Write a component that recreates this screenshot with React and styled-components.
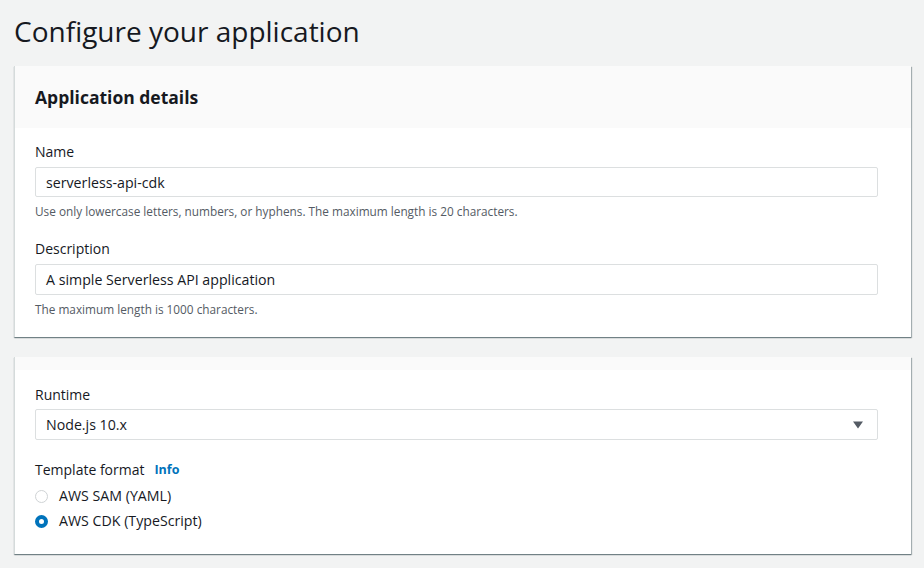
import React, { useState } from 'react';
import styled, { createGlobalStyle } from 'styled-components';

const GlobalStyle = createGlobalStyle`
  html, body {
    margin: 0;
    padding: 0;
    background: #f2f3f3;
    font-family: "Open Sans", "Noto Sans", Arial, sans-serif;
    color: #16191f;
  }
`

const Page = styled.div`
  padding: 13px 13px 16px 14px;
`

const PageTitle = styled.h1`
  margin: 0 0 17px 0;
  font-size: 28px;
  font-weight: 400;
  line-height: 36px;
  color: #16191f;
`

const Card = styled.section`
  background: #fff;
  border-left: 1px solid #d5dbdb;
  box-shadow: 0 1px 1px 0 rgba(0, 28, 36, 0.35), 1px 1px 1px 0 rgba(0, 28, 36, 0.28);
  margin-bottom: 20px;
`

const CardHeader = styled.div`
  background: #fafafa;
  height: ${p => p.$h}px;
  padding-left: 20px;
  display: flex;
  align-items: center;
  h2 {
    margin: 0;
    font-size: 17.5px;
    font-weight: 700;
  }
`

const CardBody = styled.div`
  padding: ${p => p.$pt}px 33px ${p => p.$pb}px 20px;
  display: flex;
  flex-direction: column;
`

const Field = styled.div`
  display: flex;
  flex-direction: column;
  margin-bottom: ${p => p.$mb || 0}px;
`

const Label = styled.div`
  font-size: 14px;
  line-height: 18px;
  color: #16191f;
  margin-bottom: ${p => p.$mb ?? 6}px;
  display: flex;
  align-items: center;
  gap: 10px;
`

const InfoLink = styled.a`
  font-size: 12.5px;
  font-weight: 700;
  color: #0073bb;
  text-decoration: none;
`

const Input = styled.div`
  height: ${p => p.$h || 30}px;
  box-sizing: border-box;
  border: 1px solid #dcdfe0;
  border-radius: 2px;
  padding: 0 10px;
  display: flex;
  align-items: center;
  justify-content: space-between;
  font-size: 14.2px;
  color: #16191f;
  background: #fff;
`

const Hint = styled.div`
  font-size: 11.8px;
  line-height: 14px;
  color: #545b64;
  margin-top: 7px;
`

const Arrow = styled.svg`
  width: 10px;
  height: 8px;
  margin-right: 4px;
`

const RadioGroup = styled.div`
  display: flex;
  flex-direction: column;
  gap: 7px;
  margin-top: 2px;
`

const RadioRow = styled.label`
  display: flex;
  align-items: center;
  gap: 11px;
  font-size: 14.2px;
  line-height: 18px;
  cursor: pointer;
`

const RadioDot = styled.span`
  width: 13px;
  height: 13px;
  box-sizing: border-box;
  border-radius: 50%;
  border: ${p => (p.$checked ? '4px solid #0073bb' : '1px solid #cfd3d5')};
  background: #fff;
  flex-shrink: 0;
`

export default function App() {
  const [format, setFormat] = useState('cdk');

  return (
    <Page>
      <GlobalStyle />
      <PageTitle>Configure your application</PageTitle>

      <Card>
        <CardHeader $h={62}>
          <h2>Application details</h2>
        </CardHeader>
        <CardBody $pt={15} $pb={21}>
          <Field $mb={22}>
            <Label>Name</Label>
            <Input>serverless-api-cdk</Input>
            <Hint>Use only lowercase letters, numbers, or hyphens. The maximum length is 20 characters.</Hint>
          </Field>
          <Field>
            <Label>Description</Label>
            <Input $h={31}>A simple Serverless API application</Input>
            <Hint>The maximum length is 1000 characters.</Hint>
          </Field>
        </CardBody>
      </Card>

      <Card>
        <CardHeader $h={13} />
        <CardBody $pt={16} $pb={24}>
          <Field $mb={21}>
            <Label $mb={5}>Runtime</Label>
            <Input $h={31}>
              Node.js 10.x
              <Arrow viewBox="0 0 10 8">
                <path d="M0 0.5 L10 0.5 L5 7.5 Z" fill="#545b64" />
              </Arrow>
            </Input>
          </Field>
          <Field>
            <Label>
              Template format <InfoLink href="#">Info</InfoLink>
            </Label>
            <RadioGroup>
              <RadioRow onClick={() => setFormat('sam')}>
                <RadioDot $checked={format === 'sam'} />
                AWS SAM (YAML)
              </RadioRow>
              <RadioRow onClick={() => setFormat('cdk')}>
                <RadioDot $checked={format === 'cdk'} />
                AWS CDK (TypeScript)
              </RadioRow>
            </RadioGroup>
          </Field>
        </CardBody>
      </Card>
    </Page>
  );
}
